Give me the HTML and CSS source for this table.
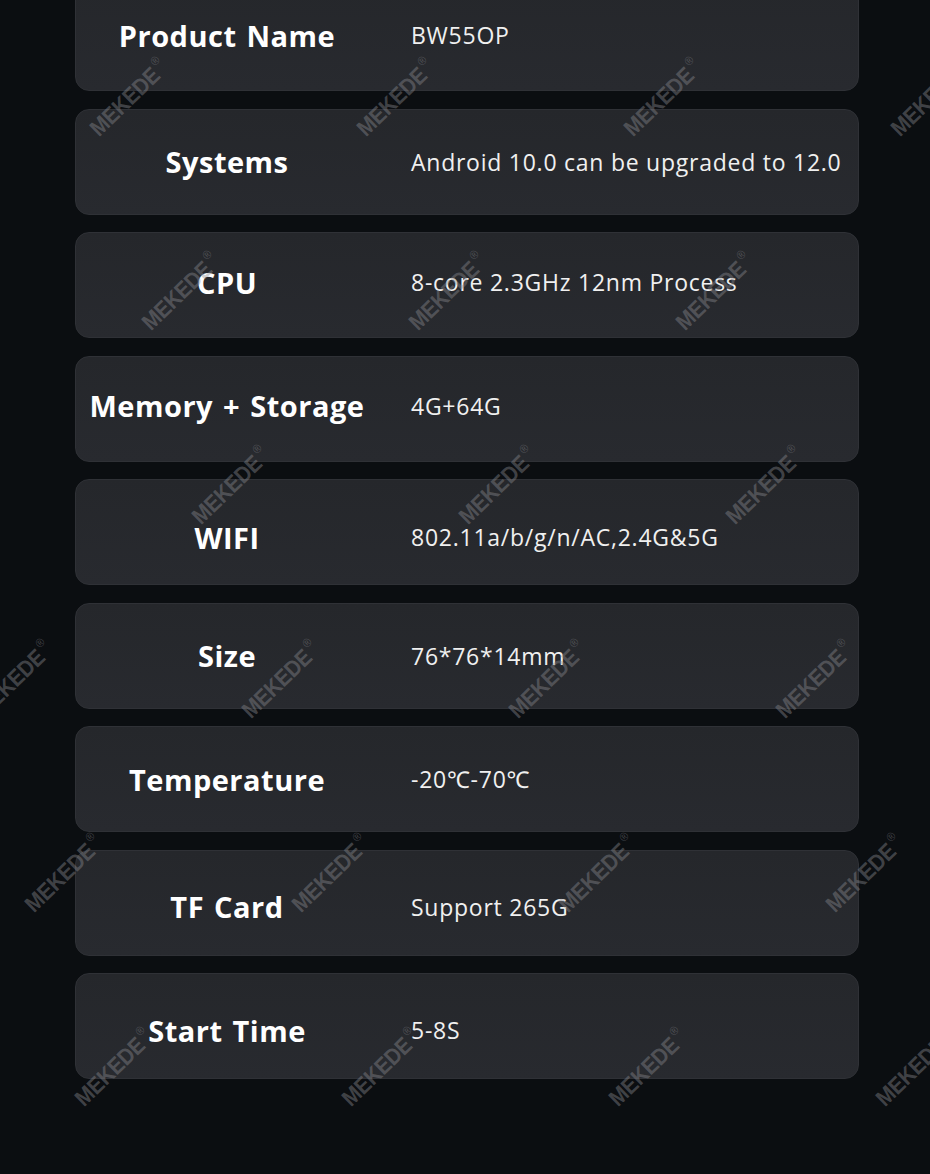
FILE: index.html
```html
<!DOCTYPE html>
<html lang="en">
<head>
  <meta charset="UTF-8">
  <meta name="viewport" content="width=device-width, initial-scale=1.0">
  <title>Specifications</title>
  <link rel="stylesheet" href="styles.css">
</head>
<body>
  <div class="page">
    <!--SPEC CARDS-->
    <div class="spec-list">
      <div class="spec-card up-3">
        <div class="spec-label">Product Name</div>
        <div class="spec-value">BW55OP</div>
      </div>
      <div class="spec-card">
        <div class="spec-label">Systems</div>
        <div class="spec-value">Android 10.0 can be upgraded to 12.0</div>
      </div>
      <div class="spec-card up-3">
        <div class="spec-label">CPU</div>
        <div class="spec-value">8-core 2.3GHz 12nm Process</div>
      </div>
      <div class="spec-card up-3">
        <div class="spec-label">Memory + Storage</div>
        <div class="spec-value">4G+64G</div>
      </div>
      <div class="spec-card down-5">
        <div class="spec-label">WIFI</div>
        <div class="spec-value">802.11a/b/g/n/AC,2.4G&amp;5G</div>
      </div>
      <div class="spec-card">
        <div class="spec-label">Size</div>
        <div class="spec-value">76*76*14mm</div>
      </div>
      <div class="spec-card">
        <div class="spec-label">Temperature</div>
        <div class="spec-value">-20℃-70℃</div>
      </div>
      <div class="spec-card down-4">
        <div class="spec-label">TF Card</div>
        <div class="spec-value">Support 265G</div>
      </div>
      <div class="spec-card down-4">
        <div class="spec-label">Start Time</div>
        <div class="spec-value">5-8S</div>
      </div>
    </div>

    <!--WATERMARK LAYER-->
    <div class="watermarks">
      <div class="wm-row">
        <span class="wm"><b>MEKEDE<sup>®</sup></b></span>
        <span class="wm"><b>MEKEDE<sup>®</sup></b></span>
        <span class="wm"><b>MEKEDE<sup>®</sup></b></span>
        <span class="wm"><b>MEKEDE<sup>®</sup></b></span>
        <span class="wm"><b>MEKEDE<sup>®</sup></b></span>
      </div>
      <div class="wm-row">
        <span class="wm"><b>MEKEDE<sup>®</sup></b></span>
        <span class="wm"><b>MEKEDE<sup>®</sup></b></span>
        <span class="wm"><b>MEKEDE<sup>®</sup></b></span>
        <span class="wm"><b>MEKEDE<sup>®</sup></b></span>
        <span class="wm"><b>MEKEDE<sup>®</sup></b></span>
      </div>
      <div class="wm-row">
        <span class="wm"><b>MEKEDE<sup>®</sup></b></span>
        <span class="wm"><b>MEKEDE<sup>®</sup></b></span>
        <span class="wm"><b>MEKEDE<sup>®</sup></b></span>
        <span class="wm"><b>MEKEDE<sup>®</sup></b></span>
        <span class="wm"><b>MEKEDE<sup>®</sup></b></span>
      </div>
      <div class="wm-row">
        <span class="wm"><b>MEKEDE<sup>®</sup></b></span>
        <span class="wm"><b>MEKEDE<sup>®</sup></b></span>
        <span class="wm"><b>MEKEDE<sup>®</sup></b></span>
        <span class="wm"><b>MEKEDE<sup>®</sup></b></span>
        <span class="wm"><b>MEKEDE<sup>®</sup></b></span>
      </div>
      <div class="wm-row">
        <span class="wm"><b>MEKEDE<sup>®</sup></b></span>
        <span class="wm"><b>MEKEDE<sup>®</sup></b></span>
        <span class="wm"><b>MEKEDE<sup>®</sup></b></span>
        <span class="wm"><b>MEKEDE<sup>®</sup></b></span>
        <span class="wm"><b>MEKEDE<sup>®</sup></b></span>
      </div>
      <div class="wm-row">
        <span class="wm"><b>MEKEDE<sup>®</sup></b></span>
        <span class="wm"><b>MEKEDE<sup>®</sup></b></span>
        <span class="wm"><b>MEKEDE<sup>®</sup></b></span>
        <span class="wm"><b>MEKEDE<sup>®</sup></b></span>
        <span class="wm"><b>MEKEDE<sup>®</sup></b></span>
      </div>
    </div>
  </div>
</body>
</html>
```

FILE: styles.css
```css
body {
  background-color: #0b0e11;
  margin: 0;
  font-family: 'Open Sans', 'Noto Sans', sans-serif;
  color: #f4f4f4;
}
.page {
  position: relative;
  height: 1174px;
  overflow: hidden;
}
.spec-list {
  display: flex;
  flex-direction: column;
  gap: 17.5px;
  width: 784px;
  margin-left: 75px;
  margin-top: -15px;
}
.spec-card {
  height: 106px;
  box-sizing: border-box;
  display: grid;
  grid-template-columns: 302px 1fr;
  align-items: center;
  background: linear-gradient(180deg, #25272b 0%, #282a2f 100%);
  border: 1px solid #2f3136;
  border-radius: 14px;
}
/* the source rows do not all sit at the exact middle */
.up-3 { padding-bottom: 6px; }
.down-4 { padding-top: 8px; }
.down-5 { padding-top: 10px; }
.spec-label {
  text-align: center;
  font-size: 29px;
  font-weight: 700;
  color: #ffffff;
  letter-spacing: 0.5px;
  word-spacing: 2px;
}
.spec-value {
  padding-left: 33px;
  font-size: 23px;
  letter-spacing: 0.75px;
  color: #f0f0f0;
  white-space: nowrap;
}

/* watermark layer sits over the cards */
.watermarks {
  position: absolute;
  top: 0;
  left: 0;
  right: 0;
  bottom: 0;
  pointer-events: none;
}
.wm-row {
  display: flex;
  height: 194px;
  align-items: center;
}
.wm-row:nth-child(1) { margin-left: -272px; }
.wm-row:nth-child(2) { margin-left: -220px; }
.wm-row:nth-child(3) { margin-left: -170px; }
.wm-row:nth-child(4) { margin-left: -120px; }
.wm-row:nth-child(5) { margin-left: -70px; }
.wm-row:nth-child(6) { margin-left: -20px; }
.wm {
  flex: 0 0 267px;
  display: flex;
  justify-content: center;
}
.wm b {
  display: inline-block;
  transform: rotate(-44deg) scaleX(0.9);
  font-family: 'Liberation Sans', Arial, sans-serif;
  font-size: 23px;
  font-weight: 700;
  color: rgba(140, 140, 145, 0.42);
  letter-spacing: -0.3px;
}
.wm sup {
  font-size: 12px;
  font-weight: 400;
  vertical-align: 12px;
  margin-left: 3px;
}
```
